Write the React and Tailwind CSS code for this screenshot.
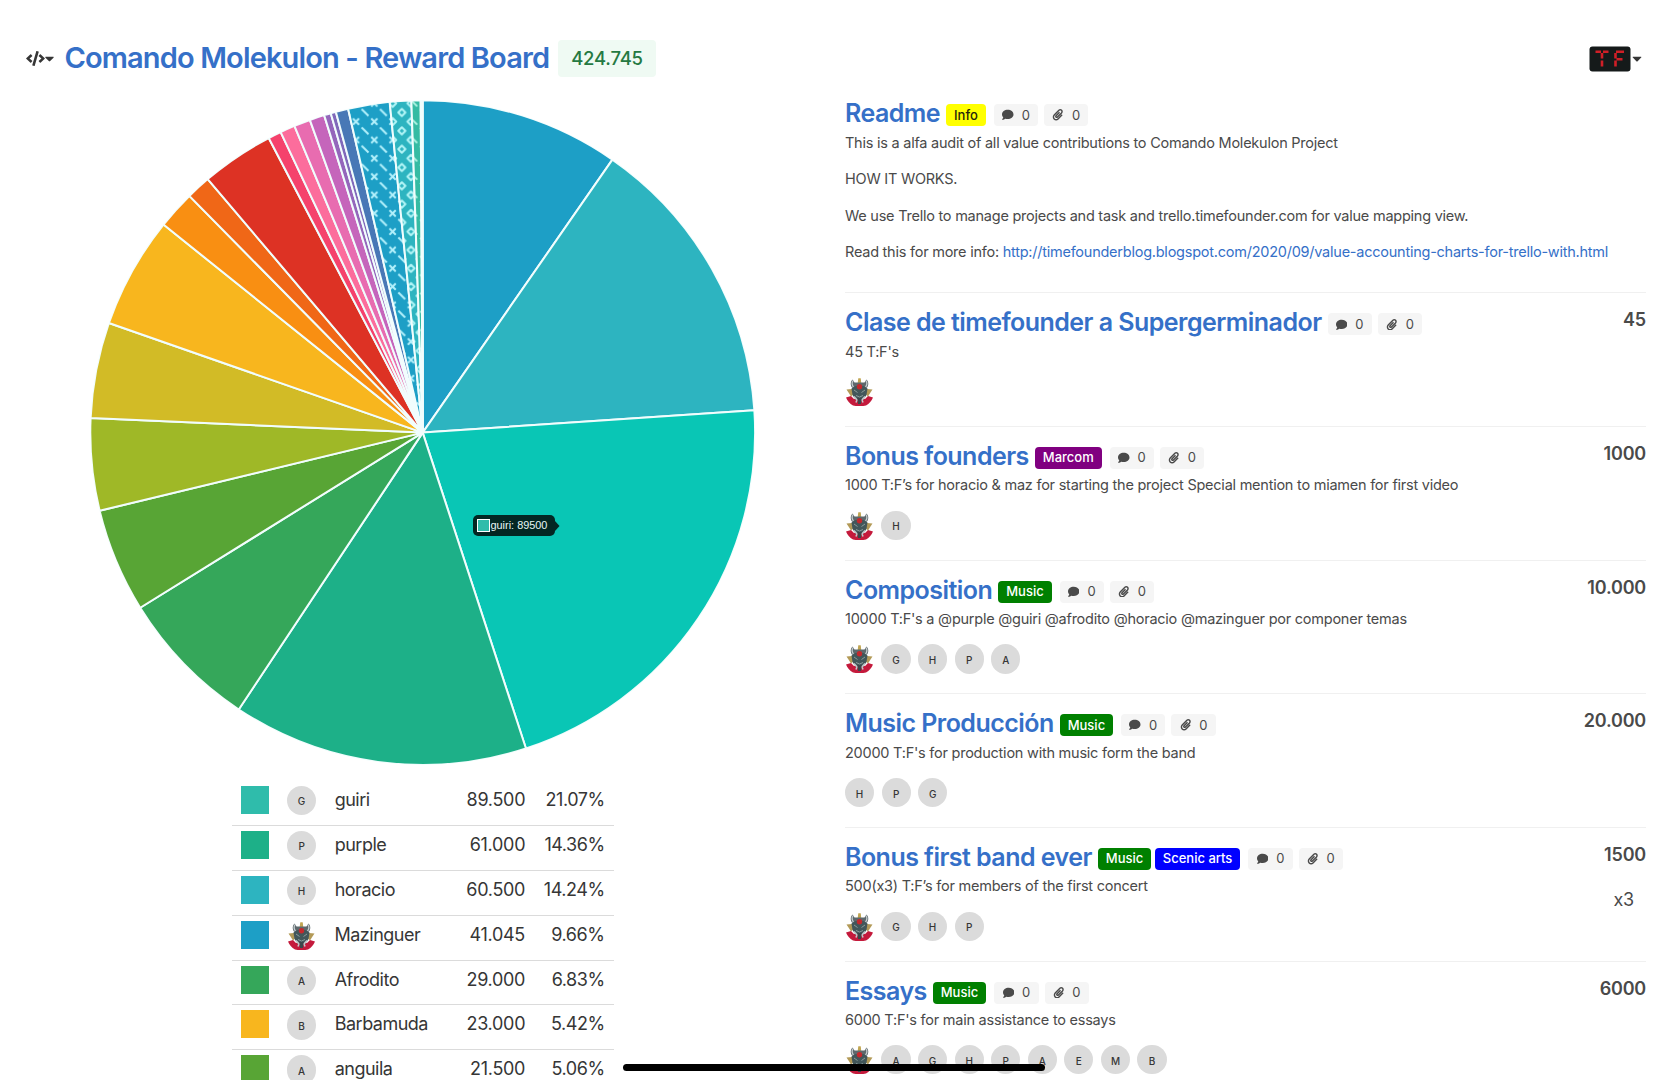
import { FaCode, FaCaretDown, FaComment, FaPaperclip } from "react-icons/fa";

const CX = 422.7;
const CY = 432.6;
const R = 332.4;
const TOP = 95;

// Each slice ends at the given clockwise angle, in degrees from twelve o'clock.
const SLICES = [
  [34.8, "#1d9fc6"],
  [86.15, "#2db4c0"],
  [161.9, "#09c6b5"],
  [213.6, "#1db088"],
  [238.2, "#35a75a"],
  [256.4, "#58a535"],
  [272.5, "#9fb827"],
  [289.25, "#d2bb26"],
  [308.75, "#f8b61e"],
  [315.4, "#f98f12"],
  [319.7, "#f06717"],
  [332.4, "#dd3224"],
  [334.7, "#f5426c"],
  [337.3, "#fc6d9c"],
  [340.15, "#e86cb0"],
  [342.75, "#c565bb"],
  [343.94, "#9466bb"],
  [344.85, "#8069ba"],
  [347.03, "#4878b6"],
  [354.3, "#1d9fc6", "crosses"],
  [358.04, "#2db4c0", "rings"],
  [359.65, "#35bba3", "dashes"],
  [359.85, "#1db088"],
  [360, "#35a75a"],
];

const point = (deg) => {
  const a = (deg * Math.PI) / 180;
  return [CX + R * Math.sin(a), CY - TOP - R * Math.cos(a)];
};

function Pie() {
  const paths = SLICES.map(([end, fill, texture], i) => {
    const [x0, y0] = point(i ? SLICES[i - 1][0] : 0);
    const [x1, y1] = point(end);
    const d = `M${CX} ${CY - TOP}L${x0} ${y0}A${R} ${R} 0 0 1 ${x1} ${y1}Z`;
    return { d, fill, texture, key: i };
  });
  return (
    <svg className="block" width="800" height="685" viewBox="0 0 800 685">
      <defs>
        <pattern id="crosses" x="365.1" y="17.5" width="18.33" height="18.33" patternUnits="userSpaceOnUse">
          <path d="M6.1 6.1l6.200 6.200M12.300 6.100l-6.200 6.200M-3.400 -3.400l6.800 6.800M14.900 14.900l6.800 6.800M14.900 -3.400l6.800 6.800M-3.400 14.900l6.800 6.800" stroke="#b2f0fb" strokeWidth="2" fill="none" />
        </pattern>
        <pattern id="rings" x="383.5" y="17.5" width="18.33" height="18.33" patternUnits="userSpaceOnUse">
          <path d="M9.170 5.600l3.570 3.570l-3.570 3.570l-3.570 -3.570zM0 -3.570l3.570 3.570l-3.570 3.570l-3.570 -3.570zM18.330 -3.570l3.570 3.570l-3.570 3.570l-3.570 -3.570zM0 14.760l3.570 3.570l-3.570 3.570l-3.570 -3.570zM18.330 14.760l3.570 3.570l-3.570 3.570l-3.570 -3.570z" stroke="#b2f5f6" strokeWidth="2" strokeLinejoin="round" fill="none" />
        </pattern>
        <pattern id="dashes" x="405" y="17.5" width="18.33" height="18.33" patternUnits="userSpaceOnUse">
          <path d="M6.2 6.2l6 6M-3 -3l6 6M15.3 15.3l6 6M15.3 -3l6 6M-3 15.3l6 6" stroke="#b5f5e5" strokeWidth="1.9" />
        </pattern>
      </defs>
      {paths.map((p) => (
        <g key={p.key}>
          <path d={p.d} fill={p.fill} />
          {p.texture && <path d={p.d} fill={`url(#${p.texture})`} />}
          <path d={p.d} fill="none" stroke="#f1fdfd" strokeWidth="2" strokeLinejoin="bevel" />
        </g>
      ))}
      <circle cx={CX} cy={CY - TOP} r={R + 1} fill="none" stroke="#ffffff" strokeWidth="2" />
    </svg>
  );
}

function Robot() {
  return (
    <svg className="block h-[29px] w-[29px] shrink-0" viewBox="0 0 29 29">
      <path d="M1 20.500l5-1.500 3 3h11l3-3 5 1.500q-2 5-7 8-6.500 1.500-13 0-5-3-7-8z" fill="#c41a3c" />
      <path d="M1.500 12.500l5.500-.5 1.500 5-2.500 2.500-2.500-4zM27.500 12.500l-5.500-.5-1.500 5 2.500 2.500 2.500-4z" fill="#b39a57" />
      <path d="M13.300 1.200h2.400l.6 5h-3.600z" fill="#c0a552" />
      <path d="M7.500 2.500q-3 3-1 7.500l4 3h8l4-3q2-4.500-1-7.500l-2 3h-10z" fill="#5d686c" />
      <path d="M8 3.500q-2 3.500.5 6.500M21 3.500q2 3.500-.5 6.500" stroke="#c4ccce" strokeWidth="1.300" fill="none" />
      <path d="M6.500 11.500l4-2.500h8l4 2.500-1 6.500-3 4.500h-8l-3-4.500z" fill="#42575a" />
      <circle cx="14.500" cy="9.700" r="2.700" fill="#c5282c" />
      <path d="M9 13l3.500 2.500M20 13l-3.500 2.500M11 18.500l3.500 1.500 3.500-1.500" stroke="#8b9c9a" strokeWidth="1" fill="none" />
      <path d="M9 19.500l3 3.500-1 2.500M20 19.500l-3 3.500 1 2.500" stroke="#c3c8ca" strokeWidth="1.600" fill="none" />
      <path d="M12.500 21h4l-.5 6h-3z" fill="#3b474b" />
    </svg>
  );
}

function Avatar({ who }) {
  if (who === "*") return <Robot />;
  return (
    <span className="flex h-[29.200px] w-[29.200px] shrink-0 items-center justify-center rounded-full bg-[#dbdbdb] pt-[2px] text-[10px] leading-none font-medium text-[#363636]">
      {who}
    </span>
  );
}

const ROWS = [
  ["bg-[#2fbcab]", "G", "guiri", "89.500", "21.07%"],
  ["bg-[#1db088]", "P", "purple", "61.000", "14.36%"],
  ["bg-[#2db4c0]", "H", "horacio", "60.500", "14.24%"],
  ["bg-[#1d9fc6]", "*", "Mazinguer", "41.045", "9.66%"],
  ["bg-[#35a75a]", "A", "Afrodito", "29.000", "6.83%"],
  ["bg-[#f8b61e]", "B", "Barbamuda", "23.000", "5.42%"],
  ["bg-[#58a535]", "A", "anguila", "21.500", "5.06%"],
];

const TAGS = {
  Info: "bg-[#ffff00] text-[#26260a]",
  Marcom: "bg-[#800080] text-white",
  Music: "bg-[#008000] text-white",
  "Scenic arts": "bg-[#0000ff] text-white",
};

function Counter({ icon: Icon }) {
  return (
    <span className="flex h-[22px] w-[44.300px] items-center justify-center gap-[8px] rounded-[4px] bg-[#f5f5f5] text-[13px] leading-none text-[#4a4a4a]">
      <Icon className="h-[11.500px] w-[11.500px]" />0
    </span>
  );
}

function Card({ title, tags = [], text, people = [], value, times, first }) {
  return (
    <article className={first ? "flex h-[208.300px] justify-between pt-[13px]" : "flex h-[133.650px] justify-between border-t border-[#f0f0f0] pt-[13px]"}>
      <div>
        <div className="flex h-[33px] items-center">
          <h2 className="text-[25px] leading-none font-semibold tracking-[-0.540px] whitespace-nowrap text-[#3570c8]">{title}</h2>
          <div className="flex gap-[3.500px] pt-[3px] pl-[6px]">
            {tags.map((t) => (
              <span key={t} className={`flex h-[22px] items-center rounded-[4px] px-[8px] text-[13px] leading-none font-medium whitespace-nowrap ${TAGS[t]}`}>{t}</span>
            ))}
          </div>
          <div className={tags.length ? "flex gap-[6px] pt-[3px] pl-[8px]" : "flex gap-[6px] pt-[3px]"}>
            <Counter icon={FaComment} />
            <Counter icon={FaPaperclip} />
          </div>
        </div>
        <div className="mt-[3.500px] flex flex-col gap-[18.300px] text-[14.500px] leading-[18.300px] tracking-[-0.240px] whitespace-nowrap text-[#4a4a4a]">{text}</div>
        <div className="mt-[16px] flex gap-[7.400px]">
          {people.map((p, i) => <Avatar key={i} who={p} />)}
        </div>
      </div>
      <div className="flex flex-col items-end pt-[1px] text-[18px] leading-[26px] tracking-[-0.200px] text-[#4a4a4a]">
        <span className="font-semibold">{value}</span>
        {times && <span className="mt-[19px] mr-[12px]">{times}</span>}
      </div>
    </article>
  );
}

const CARDS = [
  {
    title: "Readme",
    first: true,
    tags: ["Info"],
    text: (
      <>
        <p>This is a alfa audit of all value contributions to Comando Molekulon Project</p>
        <p>HOW IT WORKS.</p>
        <p>We use Trello to manage projects and task and trello.timefounder.com for value mapping view.</p>
        <p>
          Read this for more info:{" "}
          <a className="text-[#3570c8]">http://timefounderblog.blogspot.com/2020/09/value-accounting-charts-for-trello-with.html</a>
        </p>
      </>
    ),
  },
  { title: "Clase de timefounder a Supergerminador", text: "45 T:F's", people: ["*"], value: "45" },
  { title: "Bonus founders", tags: ["Marcom"], text: "1000 T:F’s for horacio & maz for starting the project Special mention to miamen for first video", people: ["*", "H"], value: "1000" },
  { title: "Composition", tags: ["Music"], text: "10000 T:F's a @purple @guiri @afrodito @horacio @mazinguer por componer temas", people: ["*", "G", "H", "P", "A"], value: "10.000" },
  { title: "Music Producción", tags: ["Music"], text: "20000 T:F's for production with music form the band", people: ["H", "P", "G"], value: "20.000" },
  { title: "Bonus first band ever", tags: ["Music", "Scenic arts"], text: "500(x3) T:F’s for members of the first concert", people: ["*", "G", "H", "P"], value: "1500", times: "x3" },
  { title: "Essays", tags: ["Music"], text: "6000 T:F's for main assistance to essays", people: ["*", "A", "G", "H", "P", "A", "E", "M", "B"], value: "6000" },
];

export default function App() {
  return (
    <div className="relative h-[1080px] w-[1668px] overflow-hidden bg-white font-['Inter',sans-serif] text-[#4a4a4a]">
      <div className="flex h-[1080px]">
        <div className="w-[845px] shrink-0">
          <header className="flex h-[95px] items-center pl-[26px]">
            <div className="mt-[22px] flex w-[38.500px] items-center text-[#363636]">
              <FaCode className="h-[15px] w-[19px]" />
              <FaCaretDown className="h-[15px] w-[9px]" />
            </div>
            <h1 className="mt-[20px] text-[29px] leading-none font-semibold tracking-[-0.860px] whitespace-nowrap text-[#3570c8]">Comando Molekulon - Reward Board</h1>
            <span className="mt-[22px] ml-[9px] flex h-[37px] w-[97.500px] items-center justify-center rounded-[4px] bg-[#effaf3] text-[18.500px] leading-none font-medium tracking-[-0.200px] text-[#257942]">424.745</span>
          </header>
          <div className="relative">
            <Pie />
            <div className="absolute top-[420px] left-[473px] flex h-[21px] w-[82px] items-center gap-[1px] rounded-[5px] bg-[#032723] pl-[3.500px] font-['Liberation_Sans',sans-serif] text-[10.900px] leading-none text-[#e8f5f4]">
              <span className="h-[13px] w-[13px] shrink-0 border border-white bg-[#2fbcab]" />
              <span className="whitespace-nowrap">guiri: 89500</span>
              <svg className="absolute top-[5.500px] left-[82px]" width="5" height="10"><path d="M0 0L4.500 5L0 10z" fill="#032723" /></svg>
            </div>
          </div>
          <div className="mt-[0.800px] ml-[232px] w-[382px]">
            {ROWS.map(([color, who, name, value, pct]) => (
              <div key={name} className="flex h-[44.950px] border-b border-[#dbdbdb] pt-[5px] pl-[9px] text-[18px] leading-[28px] text-[#363636]">
                <span className={`h-[28px] w-[28px] ${color}`} />
                <span className="ml-[18px]"><Avatar who={who} /></span>
                <span className="ml-[18.500px] w-[110px] tracking-[-0.500px]">{name}</span>
                <span className="w-[80.500px] text-right tracking-[-0.300px]">{value}</span>
                <span className="w-[79.500px] text-right tracking-[-0.450px]">{pct}</span>
              </div>
            ))}
          </div>
        </div>
        <div className="w-[801px] shrink-0">
          <div className="flex h-[84px] items-center justify-end pt-[33px] pr-[4px]">
            <svg width="42" height="26" viewBox="0 0 42 26">
              <rect x=".5" y=".5" width="41" height="25" rx="3" fill="#151a1a" />
              <path d="M6.500 5.800h5.500M14 5.800h5.500M13 7v5.500M13 14.500v6M27 5.800h8M26.500 7v5.500M27.500 13.300h6M26.500 14.500v6" stroke="#d01f27" strokeWidth="2.600" fill="none" />
            </svg>
            <FaCaretDown className="ml-[1px] h-[15px] w-[10px] text-[#363636]" />
          </div>
          {CARDS.map((c) => <Card key={c.title} {...c} />)}
        </div>
      </div>
      <div className="absolute top-[1064px] left-[623px] h-[6.500px] w-[422px] rounded-full bg-black" />
    </div>
  );
}
